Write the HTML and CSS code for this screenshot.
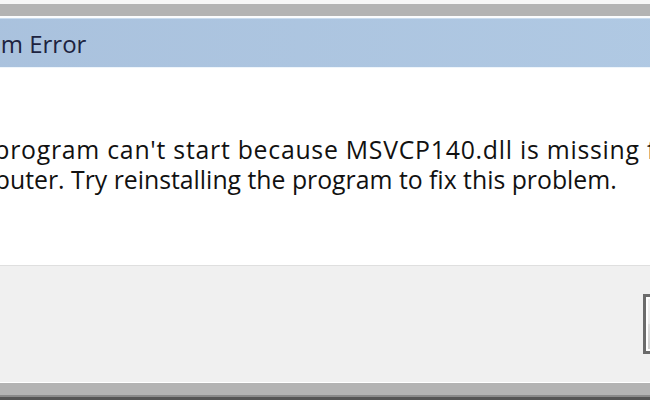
FILE: index.html
```html
<!DOCTYPE html>
<html lang="en">
<head>
    <meta charset="UTF-8">
    <title>System Error</title>
    <link rel="stylesheet" href="styles.css">
</head>
<body>
    <div class="window">
        <div class="frame-top"></div>
        <div class="frame-band"></div>
        <div class="frame-gap"></div>
        <div class="titlebar">
            <span class="title">MSVCP140.dll - System Error</span>
        </div>
        <div class="content">
            <p class="message"><span class="line-first">The program can't start because MSVCP140.dll is missing from your</span><br>computer. Try reinstalling the program to fix this problem.</p>
        </div>
        <div class="footer">
            <button type="button" class="btn">OK</button>
        </div>
        <div class="frame-bottom"></div>
    </div>
</body>
</html>
```

FILE: styles.css
```css
:root {
    --frameGray: #b3b3b3;
    --titleBlue: #abc5df;
    --footerGray: #f0f0f0;
}

html, body {
    margin: 0;
    padding: 0;
    height: 100%;
    overflow: hidden;
    background: #ffffff;
}

body {
    font-family: 'Open Sans', 'Noto Sans', sans-serif;
}

.window {
    width: 1000px;
    height: 400px;
    margin-left: -200px;
    display: flex;
    flex-direction: column;
}

.frame-top {
    height: 4px;
    background: #f6f6f6;
}

.frame-band {
    height: 12px;
    background: var(--frameGray);
}

.frame-gap {
    height: 2px;
    background: #fbfcfd;
}

.titlebar {
    height: 48px;
    border-top: 1px solid #c9dbee;
    background: linear-gradient(to right, #a8c0dc, #b1cae4);
    display: flex;
    align-items: center;
}

.title {
    margin-left: -31px;
    font-size: 24px;
    color: #1d2340;
    white-space: nowrap;
}

.content {
    height: 197px;
    border-top: 1px solid #eef5fb;
    background: #ffffff;
}

.message {
    margin: 0;
    padding: 66px 0 0 145px;
    font-size: 24.8px;
    line-height: 30px;
    color: #111111;
    white-space: nowrap;
}

/* first line renders a touch wider in the original dialog */
.line-first {
    display: inline-block;
    margin-left: -3px;
    letter-spacing: 0.75px;
}

.footer {
    height: 116px;
    border-top: 1px solid #dfdfdf;
    background: var(--footerGray);
    display: flex;
    align-items: center;
    justify-content: flex-end;
    padding-right: 47px;
}

.btn {
    width: 110px;
    height: 60px;
    border: 3px solid #6b6b6b;
    box-shadow: inset 0 0 0 2px #ffffff;
    background: linear-gradient(#f2f2f2, #ebebeb 50%, #dddddd 51%, #cfcfcf);
    font-family: inherit;
    font-size: 24px;
    color: #000000;
}

.frame-bottom {
    height: 17px;
    border-top: 1px solid #ffffff;
    background: linear-gradient(var(--frameGray) 12px, #8a8a8a 12px, #8a8a8a 14px, #555555 14px);
}
```
